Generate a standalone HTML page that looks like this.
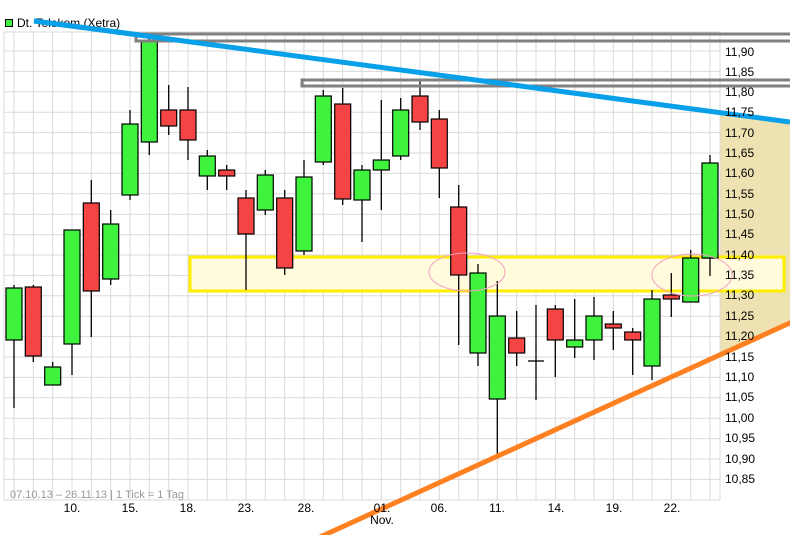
<!DOCTYPE html>
<html><head><meta charset="utf-8"><style>
html,body{margin:0;padding:0;background:#fff;}
svg{display:block;font-family:"Liberation Sans",sans-serif;}
</style></head><body>
<svg width="790" height="535" viewBox="0 0 790 535" xmlns="http://www.w3.org/2000/svg">
<rect width="790" height="535" fill="#fff"/>
<!-- tan triangle -->
<polygon points="720,113 790,122 790,322 720,354" fill="#efe2b2"/>
<!-- grid -->
<g stroke="#d9d9d9" stroke-width="1">
<line x1="14" y1="32" x2="14" y2="500"/><line x1="33.3" y1="32" x2="33.3" y2="500"/><line x1="52.7" y1="32" x2="52.7" y2="500"/><line x1="72" y1="32" x2="72" y2="500"/><line x1="91.3" y1="32" x2="91.3" y2="500"/><line x1="110.7" y1="32" x2="110.7" y2="500"/><line x1="130" y1="32" x2="130" y2="500"/><line x1="149.3" y1="32" x2="149.3" y2="500"/><line x1="168.7" y1="32" x2="168.7" y2="500"/><line x1="188" y1="32" x2="188" y2="500"/><line x1="207.3" y1="32" x2="207.3" y2="500"/><line x1="226.7" y1="32" x2="226.7" y2="500"/><line x1="246" y1="32" x2="246" y2="500"/><line x1="265.3" y1="32" x2="265.3" y2="500"/><line x1="284.7" y1="32" x2="284.7" y2="500"/><line x1="304" y1="32" x2="304" y2="500"/><line x1="323.3" y1="32" x2="323.3" y2="500"/><line x1="342.7" y1="32" x2="342.7" y2="500"/><line x1="362" y1="32" x2="362" y2="500"/><line x1="381.3" y1="32" x2="381.3" y2="500"/><line x1="400.7" y1="32" x2="400.7" y2="500"/><line x1="420" y1="32" x2="420" y2="500"/><line x1="439.3" y1="32" x2="439.3" y2="500"/><line x1="458.7" y1="32" x2="458.7" y2="500"/><line x1="478" y1="32" x2="478" y2="500"/><line x1="497.3" y1="32" x2="497.3" y2="500"/><line x1="516.7" y1="32" x2="516.7" y2="500"/><line x1="536" y1="32" x2="536" y2="500"/><line x1="555.3" y1="32" x2="555.3" y2="500"/><line x1="574.7" y1="32" x2="574.7" y2="500"/><line x1="594" y1="32" x2="594" y2="500"/><line x1="613.3" y1="32" x2="613.3" y2="500"/><line x1="632.7" y1="32" x2="632.7" y2="500"/><line x1="652" y1="32" x2="652" y2="500"/><line x1="671.3" y1="32" x2="671.3" y2="500"/><line x1="690.7" y1="32" x2="690.7" y2="500"/><line x1="710" y1="32" x2="710" y2="500"/>
<line x1="4" y1="32" x2="720" y2="32"/>
<line x1="4" y1="51" x2="720" y2="51"/><line x1="4" y1="71.4" x2="720" y2="71.4"/><line x1="4" y1="91.8" x2="720" y2="91.8"/><line x1="4" y1="112.2" x2="720" y2="112.2"/><line x1="4" y1="132.6" x2="720" y2="132.6"/><line x1="4" y1="153" x2="720" y2="153"/><line x1="4" y1="173.4" x2="720" y2="173.4"/><line x1="4" y1="193.8" x2="720" y2="193.8"/><line x1="4" y1="214.2" x2="720" y2="214.2"/><line x1="4" y1="234.6" x2="720" y2="234.6"/><line x1="4" y1="255" x2="720" y2="255"/><line x1="4" y1="275.4" x2="720" y2="275.4"/><line x1="4" y1="295.8" x2="720" y2="295.8"/><line x1="4" y1="316.2" x2="720" y2="316.2"/><line x1="4" y1="336.6" x2="720" y2="336.6"/><line x1="4" y1="357" x2="720" y2="357"/><line x1="4" y1="377.4" x2="720" y2="377.4"/><line x1="4" y1="397.8" x2="720" y2="397.8"/><line x1="4" y1="418.2" x2="720" y2="418.2"/><line x1="4" y1="438.6" x2="720" y2="438.6"/><line x1="4" y1="459" x2="720" y2="459"/><line x1="4" y1="479.4" x2="720" y2="479.4"/><line x1="4" y1="500" x2="720" y2="500"/>
<line x1="4" y1="32" x2="4" y2="500"/><line x1="720" y1="32" x2="720" y2="500"/>
</g>
<!-- yellow zone -->
<rect x="190" y="257" width="594" height="34" fill="#fffbdc" stroke="#ffee00" stroke-width="3"/>
<!-- candles -->
<g stroke="#000" stroke-width="1.3">
<line x1="14" y1="285" x2="14" y2="408"/><line x1="33.3" y1="285" x2="33.3" y2="362"/><line x1="52.7" y1="362" x2="52.7" y2="385"/><line x1="72" y1="240" x2="72" y2="375"/><line x1="91.3" y1="180" x2="91.3" y2="337"/><line x1="110.7" y1="210" x2="110.7" y2="285"/><line x1="130" y1="110" x2="130" y2="200"/><line x1="149.3" y1="35" x2="149.3" y2="155"/><line x1="168.7" y1="85" x2="168.7" y2="135"/><line x1="188" y1="87" x2="188" y2="160"/><line x1="207.3" y1="150" x2="207.3" y2="190"/><line x1="226.7" y1="165" x2="226.7" y2="190"/><line x1="246" y1="190" x2="246" y2="290"/><line x1="265.3" y1="170" x2="265.3" y2="215"/><line x1="284.7" y1="190" x2="284.7" y2="275"/><line x1="304" y1="160" x2="304" y2="255"/><line x1="323.3" y1="90" x2="323.3" y2="165"/><line x1="342.7" y1="88" x2="342.7" y2="205"/><line x1="362" y1="165" x2="362" y2="242"/><line x1="381.3" y1="100" x2="381.3" y2="210"/><line x1="400.7" y1="98" x2="400.7" y2="160"/><line x1="420" y1="80" x2="420" y2="130"/><line x1="439.3" y1="110" x2="439.3" y2="198"/><line x1="458.7" y1="185" x2="458.7" y2="345"/><line x1="478" y1="264" x2="478" y2="366"/><line x1="497.3" y1="281" x2="497.3" y2="455"/><line x1="516.7" y1="311" x2="516.7" y2="366"/><line x1="536" y1="305" x2="536" y2="400"/><line x1="555.3" y1="305" x2="555.3" y2="377"/><line x1="574.7" y1="299" x2="574.7" y2="358"/><line x1="594" y1="297" x2="594" y2="360"/><line x1="613.3" y1="311" x2="613.3" y2="350"/><line x1="632.7" y1="328" x2="632.7" y2="375"/><line x1="652" y1="290" x2="652" y2="380"/><line x1="671.3" y1="273" x2="671.3" y2="317"/><line x1="690.7" y1="250" x2="690.7" y2="302"/><line x1="710" y1="155" x2="710" y2="276"/>
<line x1="528" y1="361" x2="544" y2="361"/><line x1="702" y1="258" x2="718" y2="258"/>
</g>
<g stroke="#000" stroke-width="1.2">
<rect x="6" y="288" width="16" height="52" fill="#3ef23e"/>
<rect x="25.3" y="287" width="16" height="69" fill="#f44444"/>
<rect x="44.7" y="367" width="16" height="18" fill="#3ef23e"/>
<rect x="64" y="230" width="16" height="114" fill="#3ef23e"/>
<rect x="83.3" y="203" width="16" height="88" fill="#f44444"/>
<rect x="102.7" y="224" width="16" height="55" fill="#3ef23e"/>
<rect x="122" y="124" width="16" height="71" fill="#3ef23e"/>
<rect x="141.3" y="41" width="16" height="101" fill="#3ef23e"/>
<rect x="160.7" y="110" width="16" height="16" fill="#f44444"/>
<rect x="180" y="110" width="16" height="30" fill="#f44444"/>
<rect x="199.3" y="156" width="16" height="20" fill="#3ef23e"/>
<rect x="218.7" y="170" width="16" height="6" fill="#f44444"/>
<rect x="238" y="198" width="16" height="36" fill="#f44444"/>
<rect x="257.3" y="175" width="16" height="35" fill="#3ef23e"/>
<rect x="276.7" y="198" width="16" height="70" fill="#f44444"/>
<rect x="296" y="177" width="16" height="74" fill="#3ef23e"/>
<rect x="315.3" y="96" width="16" height="66" fill="#3ef23e"/>
<rect x="334.7" y="104" width="16" height="95" fill="#f44444"/>
<rect x="354" y="170" width="16" height="30" fill="#3ef23e"/>
<rect x="373.3" y="160" width="16" height="10" fill="#3ef23e"/>
<rect x="392.7" y="110" width="16" height="46" fill="#3ef23e"/>
<rect x="412" y="96" width="16" height="26" fill="#f44444"/>
<rect x="431.3" y="119" width="16" height="49" fill="#f44444"/>
<rect x="450.7" y="207" width="16" height="68" fill="#f44444"/>
<rect x="470" y="273" width="16" height="80" fill="#3ef23e"/>
<rect x="489.3" y="316" width="16" height="83" fill="#3ef23e"/>
<rect x="508.7" y="338" width="16" height="15" fill="#f44444"/>
<rect x="547.3" y="309" width="16" height="31" fill="#f44444"/>
<rect x="566.7" y="340" width="16" height="7" fill="#3ef23e"/>
<rect x="586" y="316" width="16" height="24" fill="#3ef23e"/>
<rect x="605.3" y="324" width="16" height="4" fill="#f44444"/>
<rect x="624.7" y="332" width="16" height="8" fill="#f44444"/>
<rect x="644" y="299" width="16" height="67" fill="#3ef23e"/>
<rect x="663.3" y="295" width="16" height="4" fill="#f44444"/>
<rect x="682.7" y="258" width="16" height="44" fill="#3ef23e"/>
<rect x="702" y="163" width="16" height="95" fill="#3ef23e"/>
</g>
<!-- ellipses -->
<ellipse cx="467" cy="272" rx="38" ry="19" fill="none" stroke="#f4a0c0" stroke-width="1"/>
<ellipse cx="692" cy="275" rx="40" ry="21" fill="none" stroke="#f4a0c0" stroke-width="1"/>
<!-- gray resistance lines -->
<g fill="none" stroke="#808080" stroke-width="3">
<polyline points="790,34 136,34 136,41 790,41"/>
<polyline points="790,80 302,80 302,86 790,86"/>
</g>
<!-- trend lines -->
<line x1="34" y1="21" x2="790" y2="122" stroke="#08a0e8" stroke-width="5"/>
<line x1="320" y1="537" x2="792" y2="322" stroke="#ff8020" stroke-width="5"/>
<!-- axis labels -->
<g font-size="12" fill="#000">
<text x="725" y="56">11,90</text><text x="725" y="76">11,85</text><text x="725" y="96">11,80</text><text x="725" y="116">11,75</text><text x="725" y="137">11,70</text><text x="725" y="157">11,65</text><text x="725" y="177">11,60</text><text x="725" y="198">11,55</text><text x="725" y="218">11,50</text><text x="725" y="238">11,45</text><text x="725" y="259">11,40</text><text x="725" y="279">11,35</text><text x="725" y="299">11,30</text><text x="725" y="320">11,25</text><text x="725" y="340">11,20</text><text x="725" y="361">11,15</text><text x="725" y="381">11,10</text><text x="725" y="401">11,05</text><text x="725" y="422">11,00</text><text x="725" y="442">10,95</text><text x="725" y="463">10,90</text><text x="725" y="483">10,85</text>
</g>
<g font-size="12" fill="#000" text-anchor="middle">
<text x="72" y="512">10.</text><text x="130" y="512">15.</text><text x="188" y="512">18.</text><text x="246" y="512">23.</text><text x="306" y="512">28.</text><text x="382" y="512">01.</text><text x="382" y="524">Nov.</text><text x="439" y="512">06.</text><text x="497" y="512">11.</text><text x="556" y="512">14.</text><text x="614" y="512">19.</text><text x="672" y="512">22.</text>
</g>
<text x="10" y="498" font-size="11" fill="#999">07.10.13 – 26.11.13 | 1 Tick = 1 Tag</text>
<rect x="5.5" y="19.5" width="7" height="7" fill="#3ef23e" stroke="#000"/>
<text x="17" y="27" font-size="12" fill="#000">Dt. Telekom (Xetra)</text>
<line x1="34" y1="21" x2="140" y2="35" stroke="#08a0e8" stroke-width="5"/>
</svg>
</body></html>
